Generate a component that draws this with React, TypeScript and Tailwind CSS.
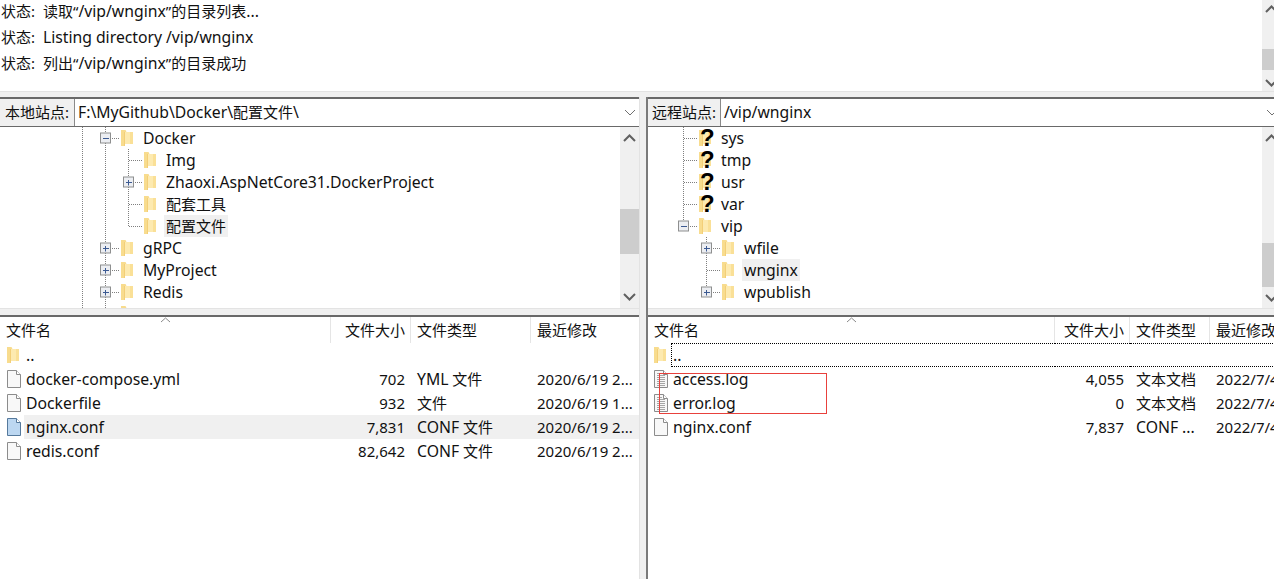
const LINE = '#7f7f7f';

type TreeNode = {
  name: string;
  folderX: number;
  full?: number[];
  half?: number;
  elbow: number;
  expander?: 'plus' | 'minus';
  unknown?: boolean;
  selected?: boolean;
};

const localTree: TreeNode[] = [
  { name: 'Docker', folderX: 121, full: [82, 105], elbow: 105, expander: 'minus' },
  { name: 'Img', folderX: 144, full: [82, 105, 128], elbow: 128 },
  { name: 'Zhaoxi.AspNetCore31.DockerProject', folderX: 144, full: [82, 105, 128], elbow: 128, expander: 'plus' },
  { name: '配套工具', folderX: 144, full: [82, 105, 128], elbow: 128 },
  { name: '配置文件', folderX: 144, full: [82, 105], half: 128, elbow: 128, selected: true },
  { name: 'gRPC', folderX: 121, full: [82, 105], elbow: 105, expander: 'plus' },
  { name: 'MyProject', folderX: 121, full: [82, 105], elbow: 105, expander: 'plus' },
  { name: 'Redis', folderX: 121, full: [82, 105], elbow: 105, expander: 'plus' },
  { name: 'shihui', folderX: 121, full: [82, 105], elbow: 105, expander: 'plus' },
];

const remoteTree: TreeNode[] = [
  { name: 'sys', folderX: 51, full: [35], elbow: 35, unknown: true },
  { name: 'tmp', folderX: 51, full: [35], elbow: 35, unknown: true },
  { name: 'usr', folderX: 51, full: [35], elbow: 35, unknown: true },
  { name: 'var', folderX: 51, full: [35], elbow: 35, unknown: true },
  { name: 'vip', folderX: 51, half: 35, elbow: 35, expander: 'minus' },
  { name: 'wfile', folderX: 74, full: [58], elbow: 58, expander: 'plus' },
  { name: 'wnginx', folderX: 74, full: [58], elbow: 58, selected: true },
  { name: 'wpublish', folderX: 74, half: 58, elbow: 58, expander: 'plus' },
];

type FileKind = 'folder' | 'plain' | 'blue' | 'text';

type FileRow = { name: string; kind: FileKind; size?: string; type?: string; date?: string; selected?: boolean; focused?: boolean };

const localFiles: FileRow[] = [
  { name: '..', kind: 'folder' },
  { name: 'docker-compose.yml', kind: 'plain', size: '702', type: 'YML 文件', date: '2020/6/19 2...' },
  { name: 'Dockerfile', kind: 'plain', size: '932', type: '文件', date: '2020/6/19 1...' },
  { name: 'nginx.conf', kind: 'blue', size: '7,831', type: 'CONF 文件', date: '2020/6/19 2...', selected: true },
  { name: 'redis.conf', kind: 'plain', size: '82,642', type: 'CONF 文件', date: '2020/6/19 2...' },
];

const remoteFiles: FileRow[] = [
  { name: '..', kind: 'folder', focused: true },
  { name: 'access.log', kind: 'text', size: '4,055', type: '文本文档', date: '2022/7/4 10:21:03' },
  { name: 'error.log', kind: 'text', size: '0', type: '文本文档', date: '2022/7/4 10:21:03' },
  { name: 'nginx.conf', kind: 'plain', size: '7,837', type: 'CONF ...', date: '2022/7/4 10:21:03' },
];

// latin runs are set a bit larger than the CJK around them
function Mixed({ text }: { text: string }) {
  return (
    <span className="leading-[22px]">
      {text.split(/([A-Za-z0-9\/\\.:_-]+)/).map((part, i) =>
        i % 2 === 1 ? (
          <span key={i} className="text-[15.75px]">
            {part}
          </span>
        ) : (
          part
        ),
      )}
    </span>
  );
}

function Folder() {
  return (
    <svg width="12" height="16" viewBox="0 0 12 16" className="shrink-0">
      <path d="M0 0h4.5l1 2H12v12H3.5v2H0z" fill="#f8dc8e" />
      <path d="M4 2h8v12H4z" fill="#fdeab0" />
      <path d="M9 2h3v12H9z" fill="#fae097" />
      <path d="M3 2h1v14H3z" fill="#f3cf78" />
    </svg>
  );
}

function Expander({ x, y, kind }: { x: number; y: number; kind: 'plus' | 'minus' }) {
  return (
    <g>
      <rect x={x - 4.5} y={y} width="10" height="10" fill="#eceef2" stroke="#8e8f8f" />
      <path d={`M${x - 2} ${y + 5.5}h6`} stroke="#3c5a92" />
      {kind === 'plus' && <path d={`M${x + 0.5} ${y + 3}v5.5`} stroke="#3c5a92" />}
    </g>
  );
}

function TreeRow({ node }: { node: TreeNode }) {
  return (
    <div className="flex h-[22px] shrink-0 items-center">
      <svg width={node.folderX} height={22} className="shrink-0">
        {(node.full ?? []).map((x) => (
          <path key={x} d={`M${x + 0.5} 0v22`} stroke={LINE} strokeDasharray="1 1" />
        ))}
        {node.half !== undefined && <path d={`M${node.half + 0.5} 0v11`} stroke={LINE} strokeDasharray="1 1" />}
        <path d={`M${node.elbow + 1} 11.5H${node.folderX - 1}`} stroke={LINE} strokeDasharray="1 1" />
        {node.expander && <Expander x={node.elbow} y={6} kind={node.expander} />}
      </svg>
      <span className="relative h-4 w-3 shrink-0">
        <Folder />
        {node.unknown && (
          <span className="absolute -top-[1px] left-[1px] font-['Liberation_Sans',sans-serif] text-[24px] leading-[18px] font-bold text-black">
            ?
          </span>
        )}
      </span>
      <span className={`ml-2 flex h-[22px] items-center px-[2px] whitespace-nowrap ${node.selected ? 'bg-[#f0f0f0]' : ''}`}>
        <Mixed text={node.name} />
      </span>
    </div>
  );
}

function Chevron({ dir }: { dir: 'up' | 'down' }) {
  return (
    <svg width="13" height="8" viewBox="0 0 13 8" fill="none" stroke="#606060" strokeWidth="2">
      <path d={dir === 'up' ? 'M1 7l5.5-5.5L12 7' : 'M1 1l5.5 5.5L12 1'} />
    </svg>
  );
}

function Scrollbar({ arrowClass, thumbClass }: { arrowClass: string; thumbClass: string }) {
  return (
    <div className="flex w-[19px] shrink-0 flex-col bg-[#f0f0f0]">
      <div className={`flex shrink-0 items-center justify-center ${arrowClass}`}>
        <Chevron dir="up" />
      </div>
      <div className="flex-1">
        <div className={`bg-[#cdcdcd] ${thumbClass}`} />
      </div>
      <div className={`flex shrink-0 items-center justify-center ${arrowClass}`}>
        <Chevron dir="down" />
      </div>
    </div>
  );
}

function SitePane({
  label,
  path,
  nodes,
  thumbClass,
  labelClass,
}: {
  label: string;
  path: string;
  nodes: TreeNode[];
  thumbClass: string;
  labelClass: string;
}) {
  return (
    <div className="flex h-[212px] shrink-0 flex-col border-t-2 border-b border-[#696969] border-b-[#e3e3e3] bg-white">
      <div className="flex h-[28px] shrink-0 items-center border-b border-[#696969]">
        <div className={`flex h-full shrink-0 items-center border-r border-[#8a8a8a] bg-[#f0f0f0] ${labelClass}`}>{label}</div>
        <div className="flex-1 pl-[3px] whitespace-nowrap">
          <Mixed text={path} />
        </div>
        <svg width="12" height="7" viewBox="0 0 12 7" fill="none" stroke="#707070" className="mr-[3px] shrink-0">
          <path d="M1 1l5 5 5-5" />
        </svg>
      </div>
      <div className="flex min-h-0 flex-1">
        <div className="flex min-w-0 flex-1 flex-col overflow-hidden">
          {nodes.map((n) => (
            <TreeRow key={n.name} node={n} />
          ))}
        </div>
        <Scrollbar arrowClass="h-[22px]" thumbClass={thumbClass} />
      </div>
    </div>
  );
}

function FileIcon({ kind }: { kind: FileKind }) {
  if (kind === 'folder') {
    return (
      <span className="w-[14px] shrink-0">
        <Folder />
      </span>
    );
  }
  const fill = kind === 'blue' ? '#bcd7f1' : '#f8f8f8';
  const stroke = kind === 'blue' ? '#55799c' : '#8c8c8c';
  return (
    <svg width="14" height="18" viewBox="0 0 14 18" className="shrink-0">
      <path d="M.5.5h9l4 4v13H.5z" fill={fill} stroke={stroke} />
      <path d="M9.5.5v4h4" fill="#fff" stroke={stroke} />
      {kind === 'text' && <path d="M3 3.5h5M3 5.5h8M3 7.5h8M3 9.5h8M3 11.5h8M3 13.5h8M3 15.5h8" stroke="#a6a6a6" />}
    </svg>
  );
}

function FileList({
  files,
  nameClass,
  sizeClass,
  typeClass,
  iconClass,
  caretClass,
}: {
  files: FileRow[];
  nameClass: string;
  sizeClass: string;
  typeClass: string;
  iconClass: string;
  caretClass: string;
}) {
  return (
    <div className="relative min-h-0 flex-1 overflow-hidden border-t-2 border-[#696969] bg-white">
      <svg width="11" height="6" viewBox="0 0 11 6" fill="none" stroke="#8a8a8a" className={`absolute top-0 ${caretClass}`}>
        <path d="M1 5l4.5-4L10 5" />
      </svg>
      <div className="flex h-[26px] items-center whitespace-nowrap">
        <div className={`flex h-full shrink-0 items-center border-r border-[#e5e5e5] ${nameClass}`}>
          <span className="pl-[6px]">文件名</span>
        </div>
        <div className={`flex h-full shrink-0 items-center justify-end border-r border-[#e5e5e5] pr-[5px] ${sizeClass}`}>文件大小</div>
        <div className={`flex h-full shrink-0 items-center border-r border-[#e5e5e5] pl-[6px] ${typeClass}`}>文件类型</div>
        <div className="pl-[6px]">最近修改</div>
      </div>
      {files.map((f) => {
        const band = `${f.selected ? 'bg-[#f0f0f0]' : ''} ${f.focused ? 'border-y border-dotted border-black' : ''}`;
        return (
          <div key={f.name} className="flex h-[24px] items-center whitespace-nowrap">
            <div className={`flex h-full shrink-0 items-center ${iconClass} ${nameClass}`}>
              <FileIcon kind={f.kind} />
              <span
                className={`ml-[3px] flex h-full flex-1 items-center ${f.focused ? 'border-l border-dotted pl-[1px]' : 'pl-[2px]'} ${band}`}
              >
                <Mixed text={f.name} />
              </span>
            </div>
            <div className={`flex h-full shrink-0 items-center justify-end pr-[6px] ${sizeClass} ${band}`}>{f.size}</div>
            <div className={`flex h-full shrink-0 items-center pl-[6px] ${typeClass} ${band}`}>
              {f.type && <Mixed text={f.type} />}
            </div>
            <div className={`flex h-full flex-1 items-center overflow-hidden pl-[6px] ${band}`}>{f.date}</div>
          </div>
        );
      })}
    </div>
  );
}

export default function App() {
  return (
    <div className="flex h-[579px] w-[1274px] flex-col overflow-hidden bg-[#f0f0f0] font-['Noto_Sans','Noto_Sans_CJK_SC',sans-serif] text-[15px] text-[#111]">
      <div className="flex h-[92px] shrink-0 overflow-hidden border-b border-[#e3e3e3] bg-white">
        <div className="w-[1262px] shrink-0 -translate-y-[2px]">
          {['读取“/vip/wnginx”的目录列表...', 'Listing directory /vip/wnginx', '列出“/vip/wnginx”的目录成功'].map((t) => (
            <div key={t} className="flex h-[26px] items-center pl-[1px]">
              <span className="w-[42px] shrink-0">状态:</span>
              <Mixed text={t} />
            </div>
          ))}
        </div>
        <Scrollbar arrowClass="h-[17px]" thumbClass="mt-[32px] h-[21px]" />
      </div>
      <div className="h-[5px] shrink-0" />
      <div className="flex min-h-0 flex-1 gap-[6px]">
        <div className="flex w-[640px] shrink-0 flex-col gap-[6px] overflow-hidden border-r border-[#e3e3e3]">
          <SitePane label="本地站点:" path="F:\MyGithub\Docker\配置文件\" nodes={localTree} labelClass="w-[75px] pl-[5px]" thumbClass="mt-[60px] h-[45px]" />
          <FileList files={localFiles} iconClass="pl-[7px]" nameClass="w-[331px]" sizeClass="w-[80px]" typeClass="w-[120px]" caretClass="left-[160px]" />
        </div>
        <div className="flex min-w-0 flex-1 flex-col gap-[6px] overflow-hidden border-l-2 border-[#7a7a7a]">
          <div className="w-[633px]">
            <SitePane label="远程站点:" path="/vip/wnginx" nodes={remoteTree} labelClass="w-[73px] pl-[4px]" thumbClass="mt-[94px] h-[44px]" />
          </div>
          <div className="relative flex min-h-0 w-[633px] flex-1 flex-col">
            <FileList files={remoteFiles} iconClass="pl-[6px]" nameClass="w-[407px]" sizeClass="w-[75px]" typeClass="w-[80px]" caretClass="left-[198px]" />
            <div className="pointer-events-none absolute top-[58px] left-[11px] h-[41px] w-[168px] border border-[#e8413c]" />
          </div>
        </div>
      </div>
    </div>
  );
}
